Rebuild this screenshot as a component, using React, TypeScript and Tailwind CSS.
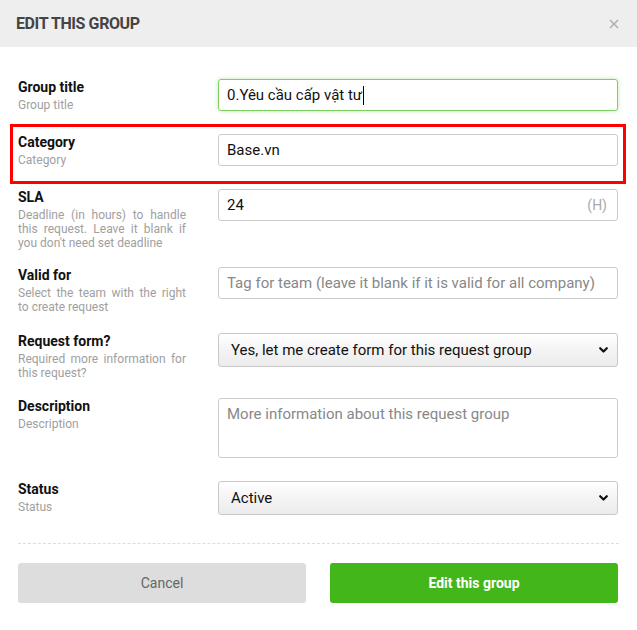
import React from "react";

const Label = ({ title, sub, justify }: { title: string; sub: string; justify?: boolean }) => (
  <div className="w-[168px] shrink-0">
    <div className="text-[14px] leading-[16px] font-bold text-[#111] mb-[3px]">{title}</div>
    <div className={`text-[12px] leading-[14px] text-[#a0a0a0] ${justify ? "text-justify" : ""}`}>{sub}</div>
  </div>
);

const Chevron = () => (
  <svg width="9" height="6" viewBox="0 0 9 6" className="absolute right-[9px] top-1/2 -translate-y-1/2">
    <path d="M1.2 1.2 L4.5 4.5 L7.8 1.2" fill="none" stroke="#111" strokeWidth="2.2" strokeLinecap="round" strokeLinejoin="round" />
  </svg>
);

const SelectBox = ({ value }: { value: string }) => (
  <div className="relative h-[34px] w-[400px] rounded-[3px] border border-[#c8c8c8] bg-gradient-to-b from-[#ffffff] via-[#f4f4f4] to-[#ececec] flex items-center pl-[12px] text-[15px] text-[#111]">
    {value}
    <Chevron />
  </div>
);

export default function App() {
  return (
    <div className="w-[637px] h-[630px] bg-white font-['Roboto',sans-serif]">
      <div className="h-[47px] bg-[#eeeeee] flex items-center justify-between pl-[16px] pr-[18px]">
        <div className="text-[16px] font-bold tracking-[-0.4px] text-[#444]">EDIT THIS GROUP</div>
        <svg width="10" height="10" viewBox="0 0 10 10">
          <path d="M1 1 L9 9 M9 1 L1 9" stroke="#aaa" strokeWidth="1.3" />
        </svg>
      </div>

      <div className="pt-[32px] px-[18px]">
        {/* Group title */}
        <div className="flex items-start h-[55px]">
          <Label title="Group title" sub="Group title" />
          <div className="ml-[32px] w-[400px] h-[32px] rounded-[3px] border border-[#7fcf63] shadow-[0_0_4px_rgba(110,200,80,0.45)] flex items-center pl-[8px] text-[15px] text-[#111]">
            0.Yêu cầu cấp vật tư
            <span className="inline-block w-[1px] h-[19px] bg-black ml-[1px]" />
          </div>
        </div>

        {/* Category */}
        <div className="relative flex items-start h-[55px]">
          <div className="absolute left-[-8px] top-[-10px] w-[616px] h-[60px] border-[3px] border-[#ff0000] pointer-events-none" />
          <Label title="Category" sub="Category" />
          <div className="ml-[32px] w-[400px] h-[32px] rounded-[3px] border border-[#cccccc] flex items-center pl-[8px] text-[15px] text-[#111]">
            Base.vn
          </div>
        </div>

        {/* SLA */}
        <div className="flex items-start h-[78px]">
          <Label title="SLA" sub="Deadline (in hours) to handle this request. Leave it blank if you don't need set deadline" justify />
          <div className="ml-[32px] w-[400px] h-[32px] rounded-[3px] border border-[#cccccc] flex items-center justify-between pl-[8px] pr-[10px] text-[15px] text-[#111]">
            <span>24</span>
            <span className="text-[14px] text-[#aaa]">(H)</span>
          </div>
        </div>

        {/* Valid for */}
        <div className="flex items-start h-[66px]">
          <Label title="Valid for" sub="Select the team with the right to create request" justify />
          <div className="ml-[32px] w-[400px] h-[32px] rounded-[3px] border border-[#cccccc] flex items-center pl-[8px] text-[15px] text-[#888]">
            Tag for team (leave it blank if it is valid for all company)
          </div>
        </div>

        {/* Request form */}
        <div className="flex items-start h-[65px]">
          <Label title="Request form?" sub="Required more information for this request?" justify />
          <div className="ml-[32px]">
            <SelectBox value="Yes, let me create form for this request group" />
          </div>
        </div>

        {/* Description */}
        <div className="flex items-start h-[83px]">
          <Label title="Description" sub="Description" />
          <div className="ml-[32px] w-[400px] h-[60px] rounded-[3px] border border-[#cccccc] pl-[8px] pt-[6px] text-[15px] leading-[18px] text-[#888]">
            More information about this request group
          </div>
        </div>

        {/* Status */}
        <div className="flex items-start h-[34px]">
          <Label title="Status" sub="Status" />
          <div className="ml-[32px]">
            <SelectBox value="Active" />
          </div>
        </div>

        <div className="mt-[28px] border-t border-dashed border-[#dddddd]" />

        <div className="mt-[19px] flex gap-[24px]">
          <button className="w-[288px] h-[40px] rounded-[3px] bg-[#dddddd] text-[14px] text-[#666]">Cancel</button>
          <button className="w-[288px] h-[40px] rounded-[3px] bg-[#43b619] text-[14px] font-bold text-white">Edit this group</button>
        </div>
      </div>
    </div>
  );
}
